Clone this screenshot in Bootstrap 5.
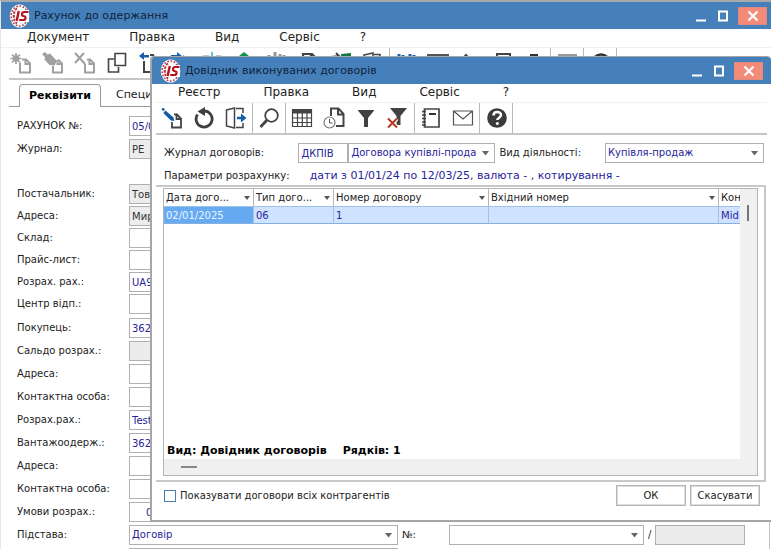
<!DOCTYPE html>
<html lang="uk">
<head>
<meta charset="utf-8">
<meta name="viewport" content="width=device-width, initial-scale=1">
<title>Рахунок до одержання</title>
<link href="https://cdn.jsdelivr.net/npm/bootstrap@5.3.0/dist/css/bootstrap.min.css" rel="stylesheet">
<style>
:root{--bar:#4580bb;--edge:#b4b4b4;--ink:#222;--val:#27249a;--off:#ececec}
body{font-family:"DejaVu Sans",Verdana,sans-serif;font-size:10px;line-height:14px;color:var(--ink);background:#fff;overflow:hidden}
.win-main{border-top:2px solid #a9a9a9;border-left:1px solid #e6e6e6}
.win-title{background:var(--bar);height:27px;color:#10233c}
.win-title .cap{font-size:11px;line-height:16px}
.win-title .logo{width:21px;height:24px}
.wbtn{width:22px;height:18px;padding:0;border:0;background:none;display:flex;align-items:center;justify-content:center}
.wbtn-x{width:29px;background:#f48b79;border:1px solid #e08a80}
.menubar{height:18px;font-size:12px;line-height:16px;gap:40px;padding-left:26px}
.menubar a{color:#222;text-decoration:none}
.dlg .menubar{gap:43px}
.tools{border-top:1px solid #f1f1f1}
.tool{width:32px;height:30px;padding:0;border:0;background:none;display:flex;align-items:center;justify-content:center}
.tool svg{width:22px;height:22px;display:block}
.tsep{width:1px;background:#b8b8b8}
.dbl{border-top:2px solid #c6c6c6}
.tabline{border-bottom:1px solid #999;width:10px}
.tab-on{border:1px solid #999;border-bottom:0;border-radius:4px 4px 0 0;width:82px;height:23px;background:#fff;padding:0;font-weight:700;font-size:11px;color:#000}
.tab-off{border:0;border-bottom:1px solid #999;background:none;padding:0 0 0 15px;text-align:left;height:23px;font-size:11px;color:#222}
.sheet{border-right:1px solid #c4c4c4;margin-right:1px;padding-top:1px}
.g-head{margin-bottom:25px}
.lbl{width:112px;flex:none;font-size:10px;color:#222}
.fld{height:20px;border:1px solid #b0b0b0;border-radius:0;background-color:#fff;color:var(--val);font-size:10px;line-height:14px;padding:2px;min-width:0}
.fld:disabled,.fld-off{background-color:var(--off);color:#333;opacity:1}
.drop{appearance:none;background-repeat:no-repeat;background-position:right 5px center;background-size:7px 5px;padding-right:18px;text-overflow:clip;background-image:url("data:image/svg+xml,%3Csvg xmlns='http://www.w3.org/2000/svg' viewBox='0 0 7 5'%3E%3Cpath d='M0 0h7L3.5 4.500z' fill='%23666'/%3E%3C/svg%3E")}
.g2{gap:2px}.g3{gap:3px}
.w-basis{width:269px;flex:none}
.w-num{width:195px;flex:none}
.w-nolbl{width:47px;flex:none}
.w-extra{flex:1 1 0;width:0}
.w-code{width:50px}
.w-jrn{width:147px}
.w-act{width:159px}
.pick-row{padding:8px 3px 0 8px}
.param-row{padding:6px 8px 2px;gap:20px}
.param-val{font-size:11px;color:var(--val)}
.dlg{position:absolute;left:150px;right:0;top:56px;background:#fff;border:1px solid #a6a6a6;border-width:1px 0 2px 2px;border-radius:4px 4px 0 0;overflow:hidden}
.frame{border:2px solid #c8c8c8;border-left:0;padding:1px 6px 5px 7px;height:297px;margin-right:1px}
.gridbox{border:1px solid #b4b4b8;height:288px;background:#fff}
.rows{table-layout:fixed;width:100%;border-collapse:separate;border-spacing:0}
.rows th{font-weight:400;height:17px;padding:1px 2px 0;border-right:1px solid #b5b5b5;line-height:16px;color:#222}
.rows td{height:18px;padding:1px 2px 0;background:#cfe2ff;border-top:1px solid #9cc2e5;border-bottom:1px solid #86b0de;border-right:1px solid #aac0dc;color:var(--val);line-height:15px;overflow:hidden;white-space:nowrap}
.rows td.picked{background:#66aaf2;color:#eaf4ff}
.rows th:last-child,.rows td:last-child{border-right:0;overflow:hidden;white-space:nowrap}
.c-date{width:90px}.c-type{width:80px}.c-no{width:155px}.c-last{width:21px}
.tri{border:3px solid transparent;border-top:4px solid #555;border-bottom:0;flex:none;margin-right:1px}
.vbar{width:17px;background:#f0f0f0;flex:none}
.vthumb{width:2px;height:16px;background:#777;margin:16px 0 0 7px}
.hbar{height:16px;background:#f0f0f0;flex:none}
.hthumb{width:16px;height:2px;background:#888;margin-left:17px}
.sum{font-weight:700;font-size:11px;color:#000;padding:0 3px 1px}
.foot{padding:3px 11px 14px 12px}
.tick{appearance:none;width:12px;height:12px;border:1px solid #4d7fb5;background:#fff;margin:0;flex:none}
.tick:checked{background:#4d7fb5}
.push{width:70px;height:21px;border:1px solid #b4b4b4;outline:1px solid #dedede;outline-offset:-2px;background:#fff;padding:0;color:#222;font-size:10px}
</style>
<script src="https://cdn.jsdelivr.net/npm/bootstrap@5.3.0/dist/js/bootstrap.bundle.min.js"></script>
</head>
<body>
<svg class="d-none" aria-hidden="true">
  <symbol id="i-logo" viewBox="0 0 21 24">
    <ellipse cx="10.500" cy="12" rx="9.800" ry="11.500" fill="#fff"/>
    <ellipse cx="10.500" cy="12" rx="8.300" ry="10" fill="none" stroke="#b3404a" stroke-width="1.600" stroke-dasharray="1.800 1.500"/>
    <path d="M8 4.500C4 7 3.500 16 8 19.500" fill="none" stroke="#b3303a" stroke-width="2" stroke-dasharray="2.500 1.200"/>
    <path d="M7 6h13v12H6z" fill="#fff"/>
    <path d="M9.800 7L7.600 17" stroke="#b8141f" stroke-width="2.400"/>
    <path d="M19.500 8h-4.300c-2.600 0-3 3.600-.6 4 2.800.4 2.400 4-.4 4h-4" fill="none" stroke="#b8141f" stroke-width="2.200"/>
  </symbol>
  <symbol id="i-min" viewBox="0 0 12 12"><path d="M1 10.500h10" stroke="#fff" stroke-width="2"/></symbol>
  <symbol id="i-max" viewBox="0 0 12 12"><path d="M2 1.500h8v9H2z" fill="none" stroke="#fff" stroke-width="2"/></symbol>
  <symbol id="i-x" viewBox="0 0 12 12"><path d="M1.500 1.500l9 9M10.500 1.500l-9 9" stroke="#fff" stroke-width="2.200"/></symbol>
  <symbol id="i-new" viewBox="0 0 22 22"><g fill="none" stroke="#a0a0a0"><path d="M10 11v9.500h10v-9l-4-4h-4M15.500 7.500v4.500H20" stroke-width="2"/><path d="M6 1v11M.5 6.500h11M2 2.500l8 8M10 2.500l-8 8" stroke-width="1.700"/></g><circle cx="6" cy="6.500" r="3.300" fill="#a0a0a0"/></symbol>
  <symbol id="i-editg" viewBox="0 0 22 22"><path d="M11 14v6.500h9v-9l-4-4M15.500 8v4H20" fill="none" stroke="#a0a0a0" stroke-width="2"/><path d="M0 2l3-2 2.500 2.500L8 1.500l7 7.500-2.500 4.500-5-.5-5-5.500L3 5z" fill="#a0a0a0"/></symbol>
  <symbol id="i-delg" viewBox="0 0 22 22"><path d="M11 12v8.500h9v-9l-4-4h-3M15.500 8v4H20" fill="none" stroke="#a0a0a0" stroke-width="2"/><path d="M1 1l10 11M10 1L1 11" stroke="#a0a0a0" stroke-width="2"/></symbol>
  <symbol id="i-copy" viewBox="0 0 22 22"><path d="M9 1.500h10.500v12H9zM8 7H2.500v13h10v-5" fill="none" stroke="#444" stroke-width="1.600"/></symbol>
  <symbol id="i-left" viewBox="0 0 22 22"><path d="M6 9v11h11V9M12 3h3l2 4" fill="none" stroke="#444" stroke-width="2"/><path d="M1 4l5-4v3h5v2.500H6V8z" fill="#155fa8"/></symbol>
  <symbol id="i-right" viewBox="0 0 22 22"><path d="M6 9v11h11V9M13 4l4 3" fill="none" stroke="#444" stroke-width="2"/><path d="M12 4L7 0v3H1v2.500h6V8z" fill="#155fa8"/></symbol>
  <symbol id="i-split" viewBox="0 0 22 22"><path d="M10 0v20" stroke="#64bdea" stroke-width="2"/><path d="M1 4.500h6M14 4.500h5" stroke="#888" stroke-width="2"/></symbol>
  <symbol id="i-up" viewBox="0 0 22 22"><path d="M10 0l5 4h-3v8H8V4H5z" fill="#129447"/><path d="M1 5h4M15 5h5" stroke="#777" stroke-width="2"/></symbol>
  <symbol id="i-bars" viewBox="0 0 22 22"><path d="M3 20V3M9 20V0M14 20V2M18 20V3" stroke="#999" stroke-width="3"/></symbol>
  <symbol id="i-page" viewBox="0 0 22 22"><path d="M5 20V2h9l5 5v13zM13 2v6h6" fill="none" stroke="#444" stroke-width="2.200"/></symbol>
  <symbol id="i-xls" viewBox="0 0 22 22"><path d="M11 2l10-1v19l-10-2z" fill="#15763f"/><path d="M1 5l8-1M6 1l4 4-4 4" fill="none" stroke="#444" stroke-width="2"/></symbol>
  <symbol id="i-door" viewBox="0 0 22 22"><path d="M2 3l9-2v20l-9-2zM12 2.500h6V7M12 19.500h6V15" fill="none" stroke="#444" stroke-width="1.600"/></symbol>
  <symbol id="i-find" viewBox="0 0 22 22"><path d="M4 2v16M8 3v7M15 2v7M19 3v16" stroke="#1b5fae" stroke-width="3"/></symbol>
  <symbol id="i-book" viewBox="0 0 22 22"><path d="M1 3h9v15H1zM12 3h9v15h-9z" fill="none" stroke="#555" stroke-width="2"/></symbol>
  <symbol id="i-pen" viewBox="0 0 22 22"><path d="M2 8l5-5 5 6" fill="none" stroke="#444" stroke-width="2"/></symbol>
  <symbol id="i-box" viewBox="0 0 22 22"><path d="M6 2h13v16H6z" fill="none" stroke="#444" stroke-width="2"/></symbol>
  <symbol id="i-dot" viewBox="0 0 22 22"><path d="M7 2h8v6H7z" fill="#333"/></symbol>
  <symbol id="i-block" viewBox="0 0 22 22"><path d="M2 2h19v14H2z" fill="#999"/></symbol>
  <symbol id="i-ring" viewBox="0 0 22 22"><circle cx="12" cy="11" r="8.500" fill="none" stroke="#333" stroke-width="2.500"/></symbol>
  <symbol id="i-edit" viewBox="0 0 22 22"><path d="M11 15v5.500h9v-9l-4-4h-3M15.500 8v4H20" fill="none" stroke="#444" stroke-width="1.800"/><path d="M4.500 3.500l8 7 .8 3.500-3.500-.6-7.500-7.400z" fill="#0f5ca5"/><path d="M.5 2.200L2 .7l2 1.500-1.800 2z" fill="#0f5ca5"/></symbol>
  <symbol id="i-reload" viewBox="0 0 22 22"><path d="M4.500 7.500A8 8 0 1 0 11 4" fill="none" stroke="#3f3f3f" stroke-width="2.800"/><path d="M4.500 4.500L12 0v9z" fill="#3f3f3f"/></symbol>
  <symbol id="i-exit" viewBox="0 0 22 22"><path d="M1.500 3l8-2v20l-8-2zM11 1.500h7V6M11 20.500h7V16" fill="none" stroke="#444" stroke-width="1.500"/><path d="M12 9.800h4V6.500l5.500 4.500-5.500 4.500v-3.300h-4z" fill="#155fa8"/></symbol>
  <symbol id="i-lens" viewBox="0 0 22 22"><circle cx="13.500" cy="8.500" r="6.300" fill="none" stroke="#444" stroke-width="1.800"/><path d="M9 13l-6.500 7" stroke="#444" stroke-width="2.800"/></symbol>
  <symbol id="i-table" viewBox="0 0 22 22"><path d="M1.500 2.500h19v17h-19zM1.500 6h19M1.500 11h19M1.500 15.500h19M6.500 4v15M11.300 4v15M16 4v15" fill="none" stroke="#444" stroke-width="1.200"/><path d="M1 2h20v4H1z" fill="#444"/></symbol>
  <symbol id="i-clock" viewBox="0 0 22 22"><path d="M8 9V1.500h7.500l5 5.500v12H13M15 1.500v6h5" fill="none" stroke="#444" stroke-width="2"/><circle cx="6.500" cy="15.500" r="5.500" fill="#fff" stroke="#777" stroke-width="1.200"/><path d="M6.500 12v4h3" fill="none" stroke="#555"/></symbol>
  <symbol id="i-funnel" viewBox="0 0 22 22"><path d="M2.500 3h17l-6.500 8v9H9v-9z" fill="#424242"/></symbol>
  <symbol id="i-funnelx" viewBox="0 0 22 22"><path d="M3 1h17l-6.500 8v9h-4V9z" fill="#424242"/><path d="M1 11.500l9 9M10 11.500l-9 9" stroke="#fff" stroke-width="4"/><path d="M1 11.500l9 9M10 11.500l-9 9" stroke="#b8381f" stroke-width="2"/></symbol>
  <symbol id="i-note" viewBox="0 0 22 22"><path d="M4.500 2h14.500v18H4.500z" fill="none" stroke="#444" stroke-width="1.700"/><path d="M9 7h7" stroke="#333" stroke-width="2"/><path d="M2 4.500h4M2 8h4M2 11.500h4M2 15h4M2 18h4" stroke="#444" stroke-width="1.300"/></symbol>
  <symbol id="i-mail" viewBox="0 0 22 22"><path d="M1.500 4h19v14h-19zM1.500 4l9.500 8 9.500-8" fill="none" stroke="#555" stroke-width="1.200"/></symbol>
  <symbol id="i-help" viewBox="0 0 22 22"><circle cx="12" cy="11" r="9.800" fill="#3b3b3b"/><path d="M8.500 8.500c0-4.500 7.500-4.500 7.500-.4 0 2.500-3.700 2.600-3.700 5" fill="none" stroke="#fff" stroke-width="2.500"/><circle cx="12.300" cy="16.500" r="1.500" fill="#fff"/></symbol>
</svg>

<main class="win-main">
  <header class="win-title d-flex align-items-center ps-2 pe-1">
    <svg class="logo"><use href="#i-logo"/></svg>
    <span class="cap ms-1 me-auto">Рахунок до одержання</span>
    <div class="d-flex align-items-center">
      <button class="wbtn" type="button" aria-label="Згорнути"><svg width="12" height="12"><use href="#i-min"/></svg></button>
      <button class="wbtn me-1" type="button" aria-label="Розгорнути"><svg width="12" height="12"><use href="#i-max"/></svg></button>
      <button class="wbtn wbtn-x" type="button" aria-label="Закрити"><svg width="12" height="12"><use href="#i-x"/></svg></button>
    </div>
  </header>
  <nav class="menubar d-flex">
    <a href="#">Документ</a><a href="#">Правка</a><a href="#">Вид</a><a href="#">Сервіс</a><a href="#">?</a>
  </nav>
  <div class="tools d-flex ps-1">
    <button class="tool" type="button" aria-label="Створити"><svg><use href="#i-new"/></svg></button>
    <button class="tool" type="button" aria-label="Змінити"><svg><use href="#i-editg"/></svg></button>
    <button class="tool" type="button" aria-label="Видалити"><svg><use href="#i-delg"/></svg></button>
    <button class="tool" type="button" aria-label="Копіювати"><svg><use href="#i-copy"/></svg></button>
    <button class="tool" type="button" aria-label="Попередній"><svg><use href="#i-left"/></svg></button>
    <button class="tool" type="button" aria-label="Наступний"><svg><use href="#i-right"/></svg></button>
    <button class="tool" type="button" aria-label="Розділити"><svg><use href="#i-split"/></svg></button>
    <button class="tool" type="button" aria-label="Провести"><svg><use href="#i-up"/></svg></button>
    <button class="tool" type="button" aria-label="Статистика"><svg><use href="#i-bars"/></svg></button>
    <button class="tool" type="button" aria-label="Документ"><svg><use href="#i-page"/></svg></button>
    <button class="tool" type="button" aria-label="Експорт"><svg><use href="#i-xls"/></svg></button>
    <button class="tool" type="button" aria-label="Вихід"><svg><use href="#i-door"/></svg></button>
    <span class="tsep"></span>
    <button class="tool" type="button" aria-label="Пошук"><svg><use href="#i-find"/></svg></button>
    <button class="tool" type="button" aria-label="Журнал"><svg><use href="#i-book"/></svg></button>
    <button class="tool" type="button" aria-label="Підпис"><svg><use href="#i-pen"/></svg></button>
    <button class="tool" type="button" aria-label="Вікно"><svg><use href="#i-box"/></svg></button>
    <button class="tool" type="button" aria-label="Друк"><svg><use href="#i-dot"/></svg></button>
    <span class="tsep"></span>
    <button class="tool" type="button" aria-label="Панель"><svg><use href="#i-block"/></svg></button>
    <span class="tsep"></span>
    <button class="tool" type="button" aria-label="Довідка"><svg><use href="#i-ring"/></svg></button>
    <span class="tsep"></span>
  </div>
  <div class="dbl ms-2"></div>
  <div class="d-flex ps-1 pt-1 ms-1 mb-2">
    <span class="tabline"></span>
    <button class="tab-on" type="button">Реквізити</button>
    <button class="tab-off flex-grow-1" type="button">Специфікація</button>
  </div>
  <form class="sheet ps-3">
    <div class="d-flex flex-column g3 g-head">
      <div class="d-flex align-items-center"><label class="lbl" for="f1">РАХУНОК №:</label><input id="f1" class="fld w-basis" value="05/01"></div>
      <div class="d-flex align-items-center"><label class="lbl" for="f2">Журнал:</label><input id="f2" class="fld fld-off w-basis" value="РЕ"></div>
    </div>
    <div class="d-flex flex-column g2 mb-1">
      <div class="d-flex align-items-center"><label class="lbl" for="f3">Постачальник:</label><input id="f3" class="fld fld-off w-basis" value="Товариство"></div>
      <div class="d-flex align-items-center"><label class="lbl" for="f4">Адреса:</label><input id="f4" class="fld fld-off w-basis" value="Мира"></div>
      <div class="d-flex align-items-center"><label class="lbl" for="f5">Склад:</label><input id="f5" class="fld w-basis"></div>
      <div class="d-flex align-items-center"><label class="lbl" for="f6">Прайс-лист:</label><input id="f6" class="fld w-basis"></div>
      <div class="d-flex align-items-center"><label class="lbl" for="f7">Розрах. рах.:</label><input id="f7" class="fld w-basis" value="UA9"></div>
      <div class="d-flex align-items-center"><label class="lbl" for="f8">Центр відп.:</label><input id="f8" class="fld w-basis"></div>
    </div>
    <div class="d-flex flex-column g3">
      <div class="d-flex align-items-center"><label class="lbl" for="g1">Покупець:</label><input id="g1" class="fld w-basis" value="362"></div>
      <div class="d-flex align-items-center"><label class="lbl" for="g2">Сальдо розрах.:</label><input id="g2" class="fld w-basis" disabled></div>
      <div class="d-flex align-items-center"><label class="lbl" for="g3">Адреса:</label><input id="g3" class="fld w-basis"></div>
      <div class="d-flex align-items-center"><label class="lbl" for="g4">Контактна особа:</label><input id="g4" class="fld w-basis"></div>
      <div class="d-flex align-items-center"><label class="lbl" for="g5">Розрах.рах.:</label><input id="g5" class="fld w-basis" value="Test"></div>
      <div class="d-flex align-items-center"><label class="lbl" for="g6">Вантажоодерж.:</label><input id="g6" class="fld w-basis" value="362"></div>
      <div class="d-flex align-items-center"><label class="lbl" for="g7">Адреса:</label><input id="g7" class="fld w-basis"></div>
      <div class="d-flex align-items-center"><label class="lbl" for="g8">Контактна особа:</label><input id="g8" class="fld w-basis"></div>
      <div class="d-flex align-items-center"><label class="lbl" for="g9">Умови розрах.:</label><input id="g9" class="fld w-basis ps-3" value="0"></div>
      <div class="d-flex align-items-center">
        <label class="lbl" for="h1">Підстава:</label>
        <select id="h1" class="fld drop w-basis me-1"><option>Договір</option></select>
        <label for="h2" class="w-nolbl">№:</label>
        <select id="h2" class="fld drop w-num"><option></option></select>
        <span class="px-1">/</span>
        <input class="fld w-extra me-4" aria-label="Додатковий номер" disabled>
      </div>
      <div class="d-flex align-items-center"><span class="lbl"></span><input class="fld w-basis" aria-label="Примітка" disabled></div>
    </div>
  </form>
</main>

<section class="dlg" role="dialog" aria-label="Довідник виконуваних договорів">
  <header class="win-title d-flex align-items-center ps-2 pe-2">
    <svg class="logo me-1"><use href="#i-logo"/></svg>
    <span class="cap me-auto">Довідник виконуваних договорів</span>
    <div class="d-flex align-items-center">
      <button class="wbtn" type="button" aria-label="Згорнути"><svg width="12" height="12"><use href="#i-min"/></svg></button>
      <button class="wbtn me-1" type="button" aria-label="Розгорнути"><svg width="12" height="12"><use href="#i-max"/></svg></button>
      <button class="wbtn wbtn-x" type="button" aria-label="Закрити"><svg width="12" height="12"><use href="#i-x"/></svg></button>
    </div>
  </header>
  <nav class="menubar d-flex">
    <a href="#">Реєстр</a><a href="#">Правка</a><a href="#">Вид</a><a href="#">Сервіс</a><a href="#">?</a>
  </nav>
  <div class="mx-1">
    <div class="tools d-flex">
      <button class="tool" type="button" aria-label="Змінити"><svg><use href="#i-edit"/></svg></button>
      <button class="tool" type="button" aria-label="Оновити"><svg><use href="#i-reload"/></svg></button>
      <button class="tool" type="button" aria-label="Вихід"><svg><use href="#i-exit"/></svg></button>
      <span class="tsep"></span>
      <button class="tool" type="button" aria-label="Пошук"><svg><use href="#i-lens"/></svg></button>
      <span class="tsep"></span>
      <button class="tool" type="button" aria-label="Таблиця"><svg><use href="#i-table"/></svg></button>
      <button class="tool" type="button" aria-label="Історія"><svg><use href="#i-clock"/></svg></button>
      <button class="tool" type="button" aria-label="Фільтр"><svg><use href="#i-funnel"/></svg></button>
      <button class="tool" type="button" aria-label="Скинути фільтр"><svg><use href="#i-funnelx"/></svg></button>
      <span class="tsep"></span>
      <button class="tool" type="button" aria-label="Блокнот"><svg><use href="#i-note"/></svg></button>
      <button class="tool" type="button" aria-label="Пошта"><svg><use href="#i-mail"/></svg></button>
      <span class="tsep"></span>
      <button class="tool" type="button" aria-label="Довідка"><svg><use href="#i-help"/></svg></button>
      <span class="tsep"></span>
    </div>
    <div class="dbl"></div>
    <div class="pick-row d-flex align-items-center">
      <label for="d1" class="me-auto">Журнал договорів:</label>
      <input id="d1" class="fld w-code" value="ДКПІВ">
      <select class="fld drop w-jrn" aria-label="Журнал"><option>Договора купівлі-продажу</option></select>
      <label for="d2" class="ms-1 me-4">Вид діяльності:</label>
      <select id="d2" class="fld drop w-act"><option>Купівля-продаж</option></select>
    </div>
    <div class="param-row d-flex">
      <span>Параметри розрахунку:</span>
      <span class="param-val">дати з 01/01/24 по 12/03/25, валюта - , котирування -</span>
    </div>
    <div class="frame">
      <div class="gridbox d-flex flex-column">
        <div class="d-flex flex-grow-1">
          <div class="flex-grow-1 d-flex flex-column justify-content-between">
            <table class="rows">
              <colgroup><col class="c-date"><col class="c-type"><col class="c-no"><col><col class="c-last"></colgroup>
              <thead><tr>
                <th><span class="d-flex align-items-center justify-content-between">Дата дого...<i class="tri"></i></span></th>
                <th><span class="d-flex align-items-center justify-content-between">Тип дого...<i class="tri"></i></span></th>
                <th><span class="d-flex align-items-center justify-content-between">Номер договору<i class="tri"></i></span></th>
                <th><span class="d-flex align-items-center justify-content-between">Вхідний номер<i class="tri"></i></span></th>
                <th>Кон</th>
              </tr></thead>
              <tbody><tr><td class="picked">02/01/2025</td><td>06</td><td>1</td><td></td><td>Mid</td></tr></tbody>
            </table>
            <div class="sum d-flex"><span class="me-3">Вид: Довідник договорів</span><span>Рядків: 1</span></div>
          </div>
          <div class="vbar"><div class="vthumb"></div></div>
        </div>
        <div class="hbar d-flex align-items-center"><div class="hthumb"></div></div>
      </div>
    </div>
  </div>
  <footer class="foot d-flex align-items-start">
    <label class="d-flex align-items-center gap-1 pt-1"><input type="checkbox" class="tick">Показувати договори всіх контрагентів</label>
    <button type="button" class="push ms-auto me-1">ОК</button>
    <button type="button" class="push">Скасувати</button>
  </footer>
</section>
</body>
</html>
